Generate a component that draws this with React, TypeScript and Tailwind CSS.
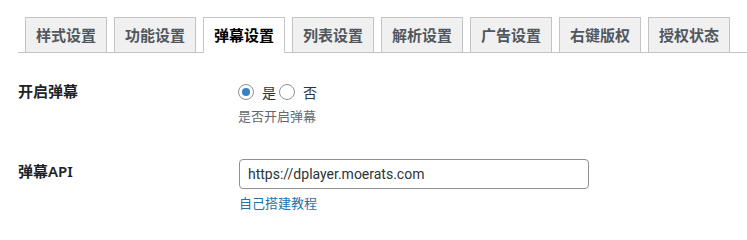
const TABS = ["样式设置", "功能设置", "弹幕设置", "列表设置", "解析设置", "广告设置", "右键版权", "授权状态"];
const ACTIVE = "弹幕设置";

function Radio({ checked }: { checked?: boolean }) {
  return (
    <span className="flex h-4 w-4 shrink-0 items-center justify-center rounded-full border border-[#8c8f94] bg-white">
      {checked && <span className="h-2 w-2 rounded-full bg-[#3582c4]" />}
    </span>
  );
}

export default function App() {
  return (
    <div
      className="min-h-[226px] w-[747px] bg-white text-[#1d2327]"
      style={{ fontFamily: '"Noto Sans", "Noto Sans CJK SC", sans-serif' }}
    >
      {/* tabs */}
      <div className="ml-[18px] flex border-b border-[#c3c4c7] pt-[17px]">
        {TABS.map((t) => (
          <div
            key={t}
            className={
              t === ACTIVE
                ? "-mb-px ml-[7px] border border-[#c3c4c7] border-b-white bg-white px-[10px] py-[5px] text-[15px] font-semibold leading-[24px] text-black"
                : "-mb-px ml-[7px] border border-[#c3c4c7] bg-[#f0f0f1] px-[10px] py-[5px] text-[15px] font-semibold leading-[24px] text-[#50575e]"
            }
          >
            {t}
          </div>
        ))}
      </div>

      {/* row 1 */}
      <div className="flex pl-[18px] pt-[29px]">
        <div className="w-[220px] shrink-0 text-[15px] font-semibold leading-[18px]">开启弹幕</div>
        <div className="flex flex-col">
          <div className="flex h-5 items-center text-[14px] text-[#2c3338]">
            <Radio checked />
            <span className="ml-[8px] mr-[3px]">是</span>
            <Radio />
            <span className="ml-[8px]">否</span>
          </div>
          <p className="mt-[5px] text-[13px] leading-[18px] text-[#646970]">是否开启弹幕</p>
        </div>
      </div>

      {/* row 2 */}
      <div className="flex pl-[18px] pt-[34px]">
        <div className="mt-[3px] w-[221px] shrink-0 text-[15px] font-semibold leading-[18px]">弹幕API</div>
        <div className="flex flex-col">
          <input
            readOnly
            value="https://dplayer.moerats.com"
            className="h-[30px] w-[350px] rounded-[4px] border border-[#8c8f94] bg-white px-2 font-['Roboto',sans-serif] text-[14px] text-[#2c3338] outline-none"
          />
          <a className="mt-[5px] text-[13px] leading-[18px] text-[#2271b1]">自己搭建教程</a>
        </div>
      </div>
    </div>
  );
}
